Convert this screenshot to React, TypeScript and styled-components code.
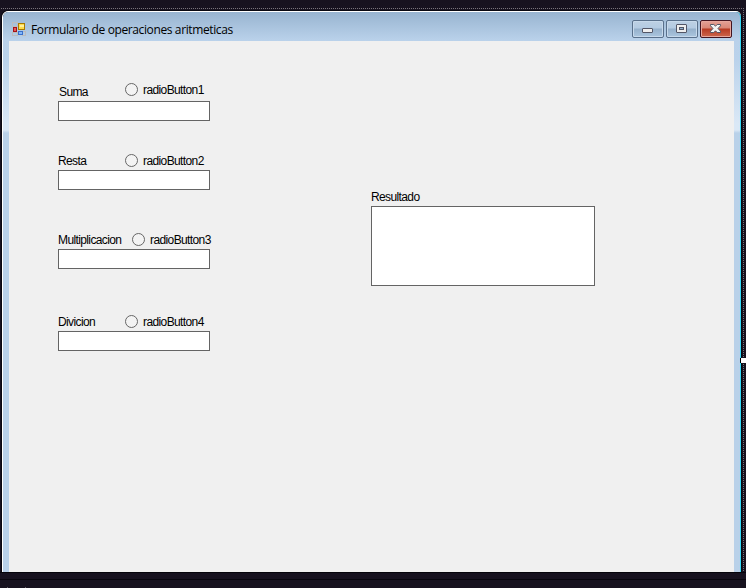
import React from "react";
import styled, { createGlobalStyle } from "styled-components";

const GlobalStyle = createGlobalStyle`
  * { box-sizing: border-box; }
  body { margin: 0; background: #17121f; overflow: hidden; }
`;

const Designer = styled.main`
  position: relative;
  width: 746px;
  height: 588px;
  padding: 10px 0 0 1px;
  overflow: hidden;
  background: #17121f;
  font-family: "Liberation Sans", Arial, sans-serif;
  color: #000;
`;

const SelectionOutline = styled.div`
  position: absolute;
  top: 8px;
  left: 0;
  width: 744px;
  height: 564px;
  background:
    repeating-linear-gradient(90deg, #18121f 0 1px, #77737b 1px 2px) 0 0 / 100% 1px no-repeat,
    repeating-linear-gradient(180deg, #77737b 0 1px, #17121f 1px 2px) 100% 0 / 1px 100% no-repeat;
`;

const ResizeHandle = styled.div`
  position: absolute;
  top: 358px;
  left: 740px;
  width: 7px;
  height: 5px;
  background: #fff;
  border-left: 1px solid #000;
`;

const Window = styled.section`
  position: relative;
  width: 741px;
  height: 562px;
  padding: 2px 1px 0 2px;
  background: #090810;
  border-radius: 7px 7px 0 0;
`;

const Frame = styled.div`
  height: 560px;
  display: flex;
  flex-direction: column;
  padding: 0 6px;
  border-right: 1px solid #35d9f7;
  border-radius: 5px 5px 0 0;
  box-shadow: 0 -1px #fff, -1px 0 #fff;
  background: linear-gradient(#98b4d0 0, #b9d1ea 28px, #bad2eb 47px, #dae8f6 112px, #dae8f6 118px, #b9d1e9 121px);
`;

const TitleBar = styled.header`
  height: 29px;
  flex: none;
  display: flex;
  align-items: center;
  padding: 5px 2px 0 3px;
`;

const AppIcon = styled.svg`
  width: 14px;
  height: 14px;
  flex: none;
  margin-right: 5px;
`;

const WindowTitle = styled.h1`
  margin: 2px 0 0;
  flex: 1;
  font: 400 12px/16px "Open Sans", "Noto Sans", sans-serif;
  letter-spacing: -0.38px;
  white-space: nowrap;
`;

const Controls = styled.div`
  display: flex;
  gap: 2px;
  margin-top: -1px;
`;

const ControlButton = styled.button<{ $danger?: boolean }>`
  width: 32px;
  height: 18px;
  padding: 0;
  display: grid;
  place-items: center;
  border: 1px solid ${({ $danger }) => ($danger ? "#43141f" : "#59708b")};
  border-radius: 2px;
  box-shadow: inset 0 0 0 1px ${({ $danger }) => ($danger ? "#e6a69c" : "#c7d9eb")};
  background: ${({ $danger }) =>
    $danger
      ? "linear-gradient(#e4a197 0, #d98777 7px, #b73a23 8px, #cc674d 100%)"
      : "linear-gradient(#bdd0e3 0, #b4cbe2 7px, #95b0cb 8px, #abc6df 100%)"};
`;

const ControlIcon = styled.svg`
  width: 14px;
  height: 12px;
  display: block;
`;

const Client = styled.div`
  flex: 1;
  display: grid;
  grid-template-columns: 152px 224px;
  column-gap: 161px;
  padding: 40px 0 0 49px;
  align-items: start;
  background: #f0f0f0;
`;

const Operations = styled.div`
  display: grid;
  grid-template-rows: 69px 79px 82px 40px;
`;

const Field = styled.div`
  display: flex;
  flex-direction: column;
`;

const FieldHeading = styled.div<{ $radioOffset: number }>`
  height: 20px;
  display: grid;
  grid-template-columns: ${({ $radioOffset }) => $radioOffset}px auto;
  align-items: end;
`;

const Label = styled.label<{ $indent?: number }>`
  margin: 0 0 2px ${({ $indent = 0 }) => $indent}px;
  font-size: 12px;
  line-height: 14px;
  letter-spacing: -0.62px;
  white-space: nowrap;
`;

const RadioLabel = styled.label<{ $raise: number }>`
  display: flex;
  align-items: center;
  height: 14px;
  margin-bottom: ${({ $raise }) => 2 + $raise}px;
  font-size: 12px;
  line-height: 14px;
  letter-spacing: -0.61px;
  white-space: nowrap;
`;

const Radio = styled.input`
  appearance: none;
  flex: none;
  width: 13px;
  height: 13px;
  margin: -1px 5px 0 0;
  border: 1px solid #666;
  border-radius: 50%;
  background: #f3f3f3;
`;

const TextBox = styled.input`
  width: 152px;
  height: 20px;
  border: 1px solid #646464;
  border-radius: 0;
  background: #fff;
`;

const Result = styled.div`
  display: flex;
  flex-direction: column;
  padding-top: 109px;
`;

const ResultBox = styled.textarea`
  width: 224px;
  height: 80px;
  border: 1px solid #646464;
  background: #fff;
  resize: none;
`;

const BottomBar = styled.footer`
  height: 16px;
  margin-left: -1px;
  border-top: 1px solid #06050b;
  background:
    linear-gradient(#625b68, #625b68) 7px 14px / 1px 1px no-repeat,
    linear-gradient(#625b68, #625b68) 25px 14px / 1px 1px no-repeat,
    linear-gradient(#08060e, #08060e) 0 6px / 100% 1px no-repeat,
    #17121f;
`;

const operations = [
  { label: "Suma", offset: 67, raise: 2, indent: 1 },
  { label: "Resta", offset: 67, raise: 0 },
  { label: "Multiplicacion", offset: 74, raise: 0 },
  { label: "Divicion", offset: 67, raise: 0 },
];

export default function App() {
  return (
    <Designer>
      <GlobalStyle />
      <SelectionOutline />
      <Window>
        <Frame>
          <TitleBar>
            <AppIcon viewBox="0 0 14 14" shapeRendering="crispEdges">
              <path d="M.5.5h5v4h-5zM.5 10.5h5v3h-5zM10.5 9.5h3v4h-3z" fill="none" stroke="#bcbcbc" />
              <rect x="6.5" y="1.5" width="6" height="6" fill="#ffdc4a" stroke="#a87900" />
              <path d="M8 3h4v2H8z" fill="#fff09b" />
              <rect x="1.5" y="5.5" width="3" height="4" fill="#e65b53" stroke="#a51217" />
              <rect x="6.5" y="9.5" width="4" height="3" fill="#82b7fa" stroke="#3970cb" />
            </AppIcon>
            <WindowTitle>Formulario de operaciones aritmeticas</WindowTitle>
            <Controls>
              <ControlButton aria-label="Minimizar">
                <ControlIcon viewBox="0 0 14 12">
                  <rect x="1.5" y="5.5" width="10" height="4" rx=".5" fill="#eee" stroke="#535666" />
                </ControlIcon>
              </ControlButton>
              <ControlButton aria-label="Maximizar">
                <ControlIcon viewBox="0 0 14 12">
                  <rect x="1.5" y="1.5" width="10" height="8" rx=".5" fill="#eee" stroke="#535666" />
                  <rect x="4.5" y="4.5" width="4" height="2" fill="#91b2cd" stroke="#535666" />
                </ControlIcon>
              </ControlButton>
              <ControlButton aria-label="Cerrar" $danger>
                <ControlIcon viewBox="0 0 14 12">
                  <path d="M1.5 1.5h3.3L6.5 3.2 8.2 1.5h3.3v1.3L9 5.5l2.5 2.7v1.3H8.2L6.5 7.8 4.8 9.5H1.5V8.2L4 5.5 1.5 2.8z" fill="#f3f3f3" stroke="#535666" />
                </ControlIcon>
              </ControlButton>
            </Controls>
          </TitleBar>
          <Client>
            <Operations>
              {operations.map((operation, index) => (
                <Field key={operation.label}>
                  <FieldHeading $radioOffset={operation.offset}>
                    <Label htmlFor={`value-${index}`} $indent={operation.indent}>{operation.label}</Label>
                    <RadioLabel $raise={operation.raise}>
                      <Radio type="radio" name="operation" />radioButton{index + 1}
                    </RadioLabel>
                  </FieldHeading>
                  <TextBox id={`value-${index}`} />
                </Field>
              ))}
            </Operations>
            <Result>
              <Label htmlFor="result">Resultado</Label>
              <ResultBox id="result" />
            </Result>
          </Client>
        </Frame>
      </Window>
      <BottomBar />
      <ResizeHandle />
    </Designer>
  );
}
